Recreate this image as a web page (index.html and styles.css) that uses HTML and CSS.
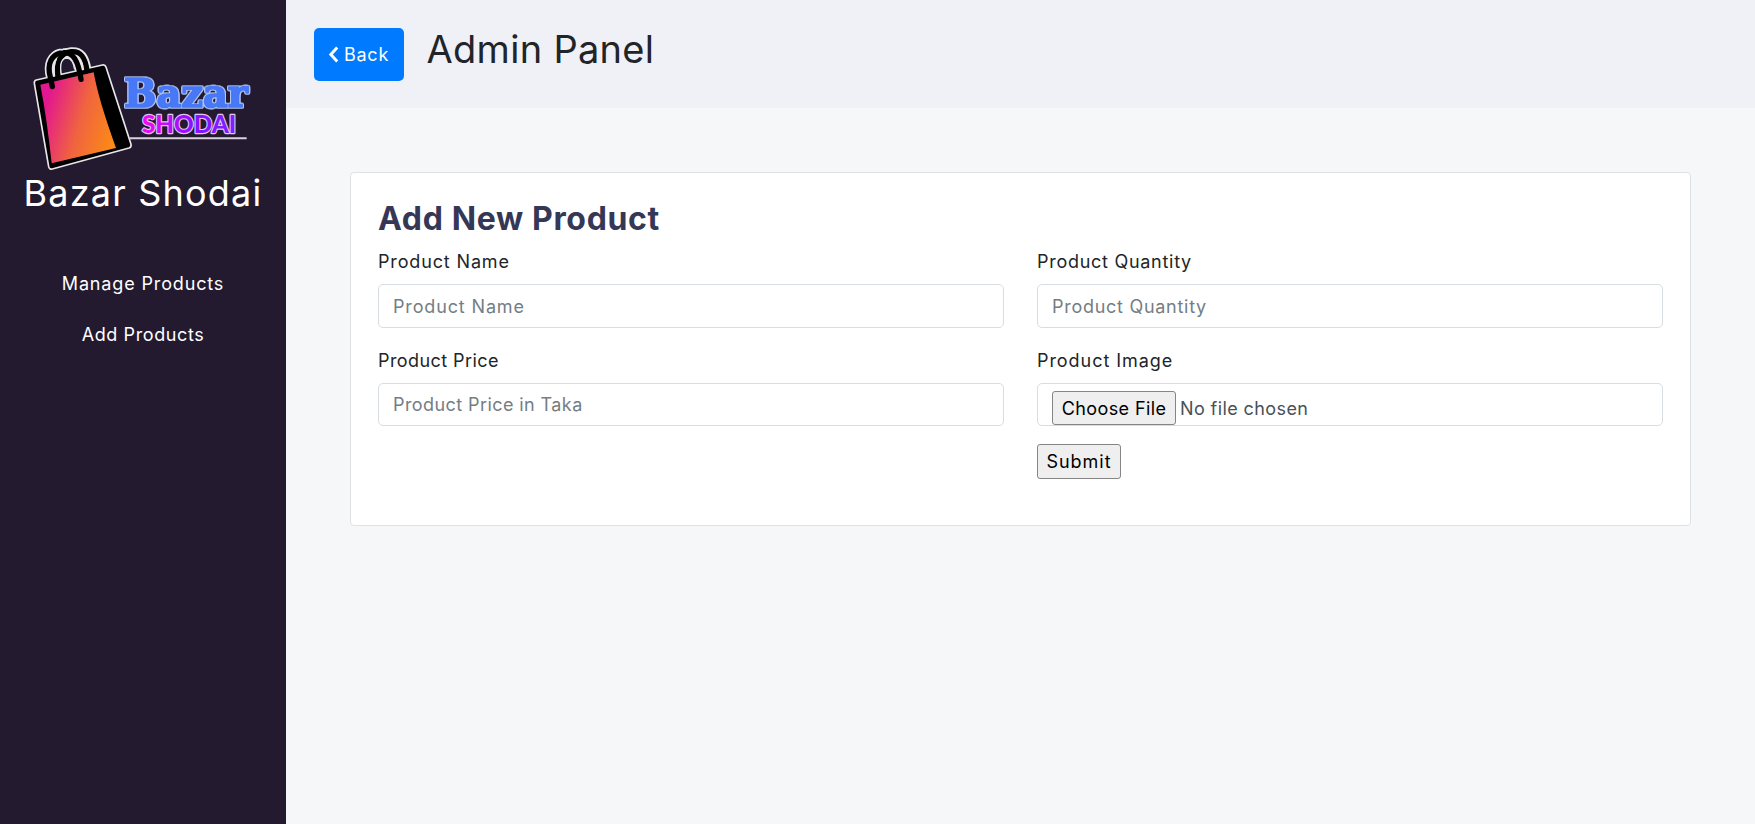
FILE: index.html
```html
<!DOCTYPE html>
<html lang="en">
<head>
<meta charset="utf-8">
<title>Admin Panel</title>
<link rel="stylesheet" href="styles.css">
</head>
<body>
<div class="layout">
  <aside class="sidebar">
    <svg class="logo" viewBox="0 0 720 435" role="img" aria-label="Bazar Shodai logo">
      <defs>
        <linearGradient id="face" x1="0" y1="0.3" x2="1" y2="0.65">
          <stop offset="0.08" stop-color="#e3178f"/>
          <stop offset="0.55" stop-color="#f0643f"/>
          <stop offset="1" stop-color="#fb8a17"/>
        </linearGradient>
        <linearGradient id="word" x1="0" x2="1">
          <stop offset="0" stop-color="#f50af0"/>
          <stop offset="0.55" stop-color="#8a10ff"/>
          <stop offset="1" stop-color="#7a22ff"/>
        </linearGradient>
      </defs>
      <path class="rule" d="M315 307H665"/>
      <g class="handle-edge">
        <path d="M82 150L73 110C68 70 90 51 115 50C145 48 160 75 168 130"/>
        <path d="M99 118C93 82 104 51 138 47C168 44 181 65 186 100"/>
      </g>
      <path class="bag" d="M34 132L232 87Q240 85 243 93L318 325Q320 333 312 336L82 399Q73 401 71 392L28 142Q27 134 34 132Z"/>
      <path class="face" d="M46 146L206 109Q220 190 273 336L80 382Q66 250 46 146Z"/>
      <g class="handle">
        <path d="M82 152L73 110C68 70 90 51 115 50C145 48 160 75 168 130"/>
        <path d="M99 122C93 82 104 51 138 47C168 44 181 65 186 104"/>
      </g>
      <path class="glint" d="M86 111C84 91 87 77 95 69C88 83 86 95 89 110M171 94C169 80 164 70 158 65C169 70 173 82 174 93"/>
      <path class="hollow" d="M108 110C104 82 111 66 126 66C140 67 146 82 149 100"/>
      <text class="bazar" x="297" y="214" textLength="372" lengthAdjust="spacingAndGlyphs">Bazar</text>
      <text class="shodai" x="351" y="291" textLength="282" lengthAdjust="spacingAndGlyphs">SHODAI</text>
    </svg>
    <h1 class="brand">Bazar Shodai</h1>
    <nav class="menu">
      <a class="manage">Manage Products</a>
      <a class="add">Add Products</a>
    </nav>
  </aside>
  <main class="main">
    <header class="topbar">
      <button class="back"><svg class="chevron" viewBox="0 0 10 16"><path d="M8.5 1.5L2.5 8L8.5 14.5"/></svg><span>Back</span></button>
      <h2 class="title">Admin Panel</h2>
    </header>
    <form class="card">
      <h3 class="heading">Add New Product</h3>
      <div class="grid">
        <div class="field"><label class="name">Product Name</label><div class="control tall name">Product Name</div></div>
        <div class="field"><label class="quantity">Product Quantity</label><div class="control tall quantity">Product Quantity</div></div>
        <div class="field"><label class="price">Product Price</label><div class="control price">Product Price in Taka</div></div>
        <div class="field"><label class="image">Product Image</label><div class="control file"><button type="button" class="native choose">Choose File</button><span class="none">No file chosen</span></div>
          <button type="button" class="native submit">Submit</button></div>
      </div>
    </form>
  </main>
</div>
</body>
</html>
```
FILE: styles.css
```css
* { box-sizing: border-box; }
body {
  margin: 0;
  background: #f5f7f9;
  color: #212529;
  font: 400 18px/27px Inter, sans-serif;
}
h1, h2, h3 { margin: 0; font-weight: 400; }
button { font: inherit; }
.layout { display: flex; height: 824px; }
.sidebar {
  width: 286px;
  flex: none;
  padding-top: 36px;
  background: #231a30;
  color: #fff;
  text-align: center;
}
.logo { display: block; width: 240px; height: 145px; margin-left: 24.5px; }
.rule { stroke: #d6d3dc; stroke-width: 6; }
.handle-edge path { fill: none; stroke: #e8e6ea; stroke-width: 26; stroke-linecap: round; }
.bag { fill: #000; stroke: #e8e6ea; stroke-width: 5; }
.face { fill: url(#face); }
.handle path { fill: none; stroke: #000; stroke-width: 16; stroke-linecap: round; }
.glint { fill: #e8e6ea; stroke: #e8e6ea; stroke-width: 2; }
.hollow { fill: #231a30; stroke: #e8e6ea; stroke-width: 4; }
.bazar {
  font: 700 118px "DejaVu Serif", serif;
  fill: #4878f5;
  stroke: #4878f5;
  stroke-width: 5;
  stroke-linejoin: round;
  filter: drop-shadow(2px 0 0 #b4c8f5) drop-shadow(-2px 0 0 #b4c8f5) drop-shadow(0 2px 0 #b4c8f5) drop-shadow(0 -2px 0 #b4c8f5);
}
.shodai {
  font: 900 76px Lato, sans-serif;
  fill: url(#word);
  stroke: #e3c6f5;
  stroke-width: 7;
  stroke-linejoin: round;
  paint-order: stroke;
}
.brand { font-size: 36px; line-height: 42px; margin-top: -9px; letter-spacing: 1.2px; white-space: nowrap; }
.menu { display: flex; flex-direction: column; gap: 24px; margin-top: 56px; }
.manage { letter-spacing: 0.85px; }
.add { letter-spacing: 0.6px; }
.main { flex: 1; }
.topbar {
  display: flex;
  gap: 23px;
  height: 107.5px;
  padding: 27.5px 27.5px 0;
  background: #f0f1f6;
}
.back {
  display: flex;
  align-items: center;
  justify-content: center;
  gap: 5px;
  width: 90px;
  height: 53px;
  padding: 0;
  border: 0;
  border-radius: 5px;
  background: #007bff;
  color: #fff;
  letter-spacing: 0.8px;
}
.chevron { width: 11px; height: 17px; }
.chevron path { fill: none; stroke: #fff; stroke-width: 2.8; }
.title { font-size: 38px; line-height: 43px; letter-spacing: 0.3px; }
.card {
  width: 1341px;
  height: 354px;
  margin: 64.5px 0 0 64px;
  padding: 27px 27px 0;
  border: 1px solid #dfe1e3;
  border-radius: 4px;
  background: #fff;
}
.heading { font-size: 32px; line-height: 38px; font-weight: 700; color: #353757; letter-spacing: 0.65px; }
.grid {
  display: grid;
  grid-template-columns: 1fr 1fr;
  column-gap: 33px;
  row-gap: 19px;
  margin-top: 10px;
}
label { display: block; height: 27px; margin-bottom: 9px; }
.name { letter-spacing: 0.85px; }
.quantity { letter-spacing: 0.72px; }
.price { letter-spacing: 0.42px; }
.image { letter-spacing: 0.95px; }
.control {
  display: flex;
  align-items: center;
  height: 43px;
  padding: 0 14px;
  border: 1px solid #d8dde1;
  border-radius: 5px;
  color: #757d84;
}
.tall { height: 44px; }
.file { align-items: flex-end; color: #495057; letter-spacing: 0.4px; }
.none { padding-bottom: 3px; }
.native {
  padding: 0;
  border: 1px solid #858585;
  border-radius: 3px;
  background: #efefef;
  color: #000;
}
.choose { width: 124px; height: 34px; margin-right: 4px; letter-spacing: 0.4px; }
.submit { display: block; width: 84px; height: 35px; margin-top: 18px; letter-spacing: 1px; }
```
